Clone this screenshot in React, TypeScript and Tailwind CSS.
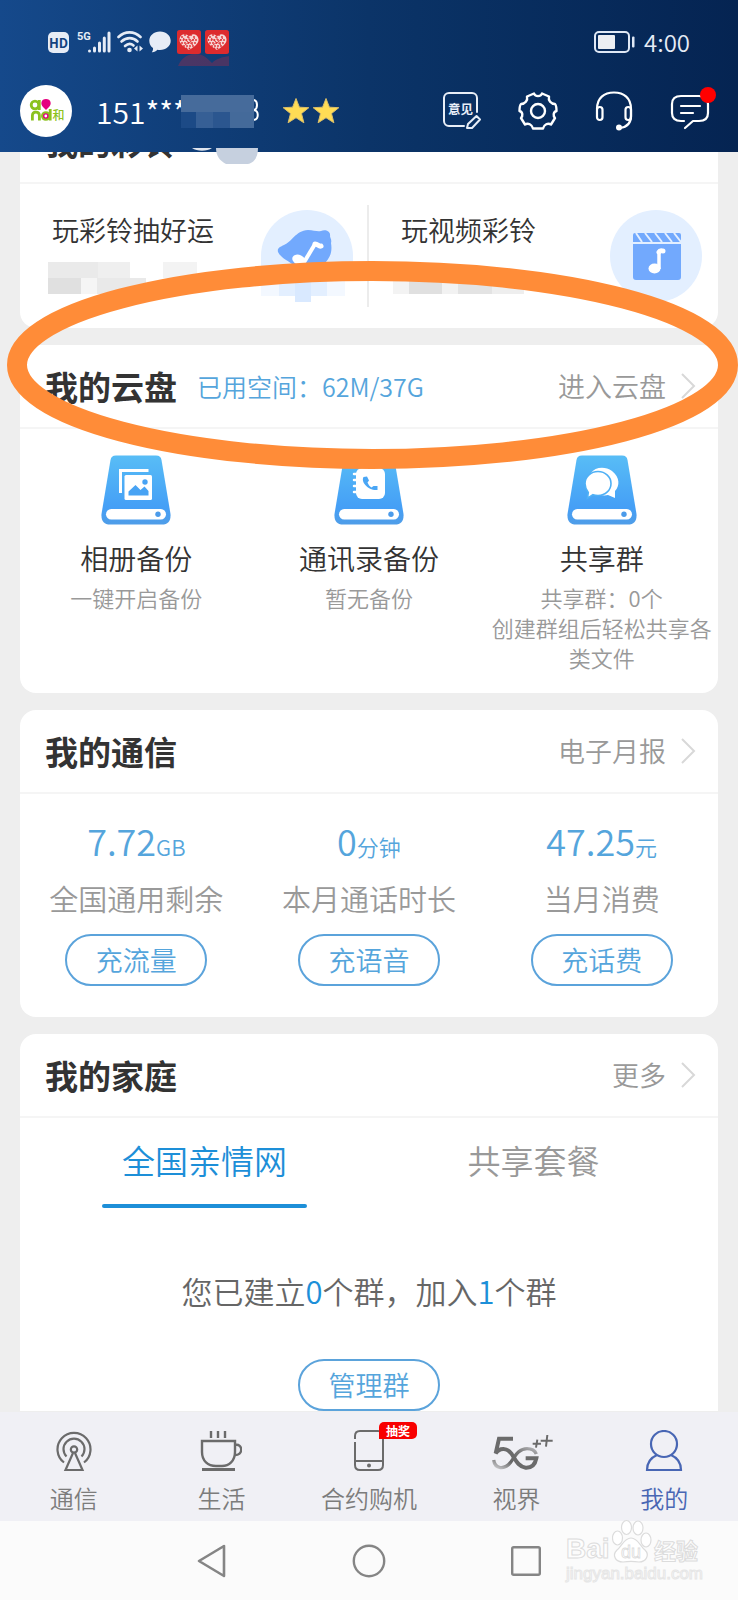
import React from "react";

const HEART_DOTS = [
  [5, 7], [8, 5], [11, 7], [14, 5], [17, 7], [19, 10], [3.5, 10], [6.5, 10], [9.5, 10], [13, 10], [16, 10],
  [5, 13], [8, 13], [11.5, 13], [15, 13], [18, 13], [7, 16], [10, 16], [13, 16], [16, 16], [9.5, 18.5], [12.5, 18.5],
];

function HeartApp() {
  return (
    <svg width="24" height="24" viewBox="0 0 24 24" aria-hidden="true">
      <rect width="24" height="24" rx="2.500" fill="#dd2b2e" />
      <path d="M12 20 C5 16 2 12.500 2.500 9 C3 4 9 2.500 12 6.500 C15 2.500 21 4 21.500 9 C22 12.500 19 16 12 20Z" fill="#f6d5d4" />
      {HEART_DOTS.map(([x, y], i) => (
        <circle key={i} cx={x} cy={y} r="0.9" fill="#dd2b2e" />
      ))}
      <path d="M6 8l5 4 M18 8l-5 4 M8 15l4-3 4 3 M12 7v3" stroke="#dd2b2e" strokeWidth="0.9" fill="none" />
    </svg>
  );
}

function StatusBar() {
  return (
    <div className="flex h-6 items-center justify-between pr-12 pl-12">
      <div className="relative flex items-center">
        <span className="flex h-[21px] w-[21px] items-center justify-center rounded-[5px] bg-[#e6ecf6] text-[13px] leading-none font-bold text-[#12427f]">
          HD
        </span>
        <svg className="ml-2" width="34" height="24" viewBox="0 0 34 24" aria-hidden="true">
          <text x="0" y="10" fontSize="11" fontWeight="700" fill="#e6ecf6" fontFamily="'Liberation Sans Narrow', Roboto, sans-serif">5G</text>
          <g stroke="#e6ecf6" strokeWidth="3" strokeLinecap="round">
            <path d="M12.500 21v0 M17.500 18v3 M22.500 13v8 M27.300 8v13 M32 3v18" />
          </g>
        </svg>
        <svg className="ml-1.5" width="26" height="24" viewBox="0 0 26 24" aria-hidden="true">
          <g fill="none" stroke="#e6ecf6" strokeWidth="2.600" strokeLinecap="round">
            <path d="M1.500 7 C8 0.800 17 0.800 23.500 7" />
            <path d="M4.500 11.500 C9.500 7 16 7 20.500 11.500" />
            <path d="M8 16 C11 13.300 14 13.300 16.500 15.500" />
          </g>
          <circle cx="12.500" cy="20" r="2.300" fill="#e6ecf6" />
          <path d="M20.500 15.500v6l-3.500-3z M22.500 15.500v6l3.500-3z" fill="#e6ecf6" />
        </svg>
        <svg className="ml-1.5" width="22" height="24" viewBox="0 0 22 24" aria-hidden="true">
          <path d="M11 1.500c6 0 10.700 4 10.700 9.300S17 20 11 20c-1 0-1.800 0-2.600-.2C7 21.500 5 22.500 2.800 22.300c1-1.200 1.400-2.600 1.200-4.200C1.700 16.500.3 14 .3 10.800.3 5.500 5 1.500 11 1.500z" fill="#e6ecf6" />
        </svg>
        <div className="ml-1.5 flex gap-1">
          <HeartApp />
          <HeartApp />
        </div>
        <svg className="absolute top-6 right-0" width="51" height="12" viewBox="0 0 51 12" aria-hidden="true">
          <path d="M0 12 C3 5 8 0 17 0 C26 0 30 5 34 9 C38 5 44 3 51 2 V12Z" fill="#7a2f55" opacity="0.55" />
        </svg>
      </div>
      <div className="flex items-center gap-2">
        <svg width="42" height="22" viewBox="0 0 42 22" aria-hidden="true">
          <rect x="1" y="1" width="34" height="20" rx="4" fill="none" stroke="#dfe8f5" strokeWidth="2" />
          <rect x="4" y="4" width="17" height="14" rx="1" fill="#eceef2" />
          <rect x="38" y="5.500" width="2.500" height="11" rx="1" fill="#dfe8f5" />
        </svg>
        <span className="text-[24px] leading-6 text-[#e6ecf6]">4:00</span>
      </div>
    </div>
  );
}

function Avatar() {
  return (
    <span className="flex h-[52px] w-[52px] shrink-0 rounded-full bg-white">
      <svg width="52" height="52" viewBox="0 0 52 52" aria-hidden="true">
        <g fill="none" stroke="#8cc220" strokeWidth="2.800">
          <circle cx="15" cy="20" r="3.800" />
          <path d="M19.300 15v10 M12.400 35.500v-5c0-4.500 7-4.500 7 0v5 M30.200 24v11.500" />
        </g>
        <path d="M26 14c5 0 6 5 3 8l-3 3-3-3c-3-3-2-8 3-8z" fill="#e5007f" />
        <circle cx="25.800" cy="31" r="3.800" fill="#e5007f" stroke="#8cc220" strokeWidth="2" />
        <circle cx="25.800" cy="31" r="1.400" fill="#fff" />
        <text x="32.500" y="34.500" fontSize="12" fontWeight="500" fill="#8cc220" fontFamily="'Noto Sans CJK SC', sans-serif">和</text>
      </svg>
    </span>
  );
}

function Star() {
  return (
    <svg width="28" height="28" viewBox="0 0 28 28" aria-hidden="true">
      <path d="M14 1.500l3.400 8.700 9.400.5-7.300 5.900 2.400 9.200-7.900-5.100-7.900 5.100 2.400-9.200L1.200 10.700l9.400-.5z" fill="#ffdc55" stroke="#d9bd6a" strokeWidth="1" />
    </svg>
  );
}

function AccountBar() {
  return (
    <div className="flex items-center pr-7 pl-5">
      <Avatar />
      <div className="relative ml-6 w-[164px] text-[30px] leading-[40px] text-white">
        151***
        <svg className="absolute top-1 right-0" width="82" height="34" viewBox="0 0 82 34" aria-hidden="true">
          <path d="M76 5c4 1 4 9 0 10c5 1 5 9 0 10" fill="none" stroke="#fff" strokeWidth="2" />
          <rect x="3" y="0" width="73" height="17" fill="#466b9b" />
          <rect x="3" y="17" width="15" height="16" fill="#1c4a86" />
          <rect x="18" y="17" width="17" height="16" fill="#365f95" />
          <rect x="35" y="17" width="17" height="16" fill="#2b568f" />
          <rect x="52" y="17" width="24" height="16" fill="#446a9a" />
        </svg>
      </div>
      <div className="ml-[22px] flex gap-0.5">
        <Star />
        <Star />
      </div>
      <div className="ml-auto flex items-center gap-9">
        <button type="button" aria-label="意见">
          <svg width="40" height="40" viewBox="0 0 40 40" fill="none" stroke="#e8eef7" strokeWidth="2" strokeLinecap="round" strokeLinejoin="round">
            <path d="M35 21V7a5 5 0 0 0-5-5H7a5 5 0 0 0-5 5v23a5 5 0 0 0 5 5h15" />
            <path d="M26 33l8.500-8 3.500 3.500-8 8.500h-5z" />
            <text x="6" y="22.500" fontSize="12.500" fontWeight="700" fill="#e8eef7" stroke="none" fontFamily="'Noto Sans CJK SC', sans-serif">意见</text>
          </svg>
        </button>
        <button type="button" aria-label="设置">
          <svg width="40" height="40" viewBox="0 0 40 40" fill="none" stroke="#fff" strokeWidth="2.400" strokeLinejoin="round">
            <path d="M16 2.500C17 6 23 6 24 2.500L31 5.500C30 9.500 33 13 37 13C38 14 38.500 18 38.500 20C35 21 35 25 37 27L33 33.500C30 31.500 26 33.500 25 37.500H15C14 33.500 10 31.500 7 33.500L3 27C5 25 5 21 1.500 20C1.500 18 2 14 3 13C7 13 10 9.500 9 5.500Z" />
            <circle cx="20" cy="20" r="7" />
          </svg>
        </button>
        <button type="button" aria-label="客服">
          <svg width="40" height="40" viewBox="0 0 40 40" fill="none" stroke="#fff" strokeWidth="2.200" strokeLinecap="round">
            <path d="M3 18C3 7 10 1.500 20 1.500S37 7 37 18v7c0 7-4 11-11 12" />
            <rect x="3" y="16" width="5.500" height="13" rx="2.700" />
            <rect x="31.500" y="16" width="5.500" height="13" rx="2.700" />
            <circle cx="25" cy="36.500" r="3" fill="#fff" stroke="none" />
          </svg>
        </button>
        <button type="button" aria-label="消息" className="relative">
          <svg width="40" height="40" viewBox="0 0 40 40" fill="none" stroke="#fff" strokeWidth="2.200" strokeLinecap="round" strokeLinejoin="round">
            <path d="M14 30H11c-6 0-9-3-9-8V13c0-5 3-8 9-8h18c6 0 9 3 9 8v9c0 5-3 8-9 8h-6l-8 7" />
            <path d="M11 15h19 M11 22h12" />
          </svg>
          <span className="absolute -top-1 right-[-6px] h-4 w-4 rounded-full bg-[#ff0000]" />
        </button>
      </div>
    </div>
  );
}

function Chevron() {
  return (
    <svg width="16" height="28" viewBox="0 0 16 28" fill="none" stroke="#d8d8d8" strokeWidth="2" aria-hidden="true">
      <path d="M2 2l12 12L2 26" />
    </svg>
  );
}

function CardHeader({ title, note, more }: { title: string; note?: string; more?: string }) {
  return (
    <div className="flex h-[84px] items-center border-b-2 border-[#f5f5f5] pr-[22px] pl-[25px]">
      <h2 className="text-[33px] leading-[40px] font-bold text-[#333]">{title}</h2>
      {note && <span className="ml-5 text-[25px] leading-[40px] text-[#55a5dc]">{note}</span>}
      {more && (
        <a href="#" className="ml-auto flex items-center gap-3.5 text-[27px] leading-[40px] text-[#999]">
          {more}
          <Chevron />
        </a>
      )}
    </div>
  );
}

function BellArt() {
  return (
    <svg width="92" height="92" viewBox="0 0 92 92" aria-hidden="true">
      <path d="M0 46A46 46 0 0 1 92 46V60H0Z" fill="#e3efff" />
      <path d="M17 42C16 38 19 37 23 35C31 32 34 21 47 20C53 20 56 22 60 21C64 19 70 21 69 26C69 28 71 29 70 33C72 45 67 51 58 58L34 56C26 50 20 48 17 42Z" fill="#72a9fd" />
      <path d="M54 34l-12 20" stroke="#fff" strokeWidth="4" />
      <path d="M54 34c3 0 4 3 6 2" stroke="#fff" strokeWidth="5" strokeLinecap="round" fill="none" />
      <ellipse cx="38" cy="50" rx="7" ry="5" fill="#fff" transform="rotate(25 38 50)" />
      <path d="M0 70H84V86H0Z" fill="#f3f8ff" />
      <path d="M18 70H66V86H18Z" fill="#e3efff" />
      <path d="M34 70H50V92H34Z" fill="#d9e9ff" />
    </svg>
  );
}

function ClapperArt() {
  return (
    <svg width="92" height="92" viewBox="0 0 92 92" aria-hidden="true">
      <circle cx="46" cy="46" r="46" fill="#e3efff" />
      <path d="M23 34h48v33a3 3 0 0 1-3 3H26a3 3 0 0 1-3-3z" fill="#72a9fd" />
      <path d="M25 23h44a2 2 0 0 1 2 2v7H23v-7a2 2 0 0 1 2-2z" fill="#72a9fd" />
      <path d="M26 23l6 9 M35 23l7 9 M45 23l7 9 M55 23l7 9 M64 23l7 9" stroke="#e3efff" strokeWidth="2" />
      <path d="M49 59V42" stroke="#fff" strokeWidth="3.500" />
      <path d="M49 42c1-2 3-1 4-1" stroke="#fff" strokeWidth="5" strokeLinecap="round" fill="none" />
      <ellipse cx="44.500" cy="58.500" rx="6" ry="5" fill="#fff" />
    </svg>
  );
}

function RingtoneCard() {
  return (
    <section className="rounded-2xl bg-white">
      <CardHeader title="我的彩铃" />
      <div className="grid h-36 grid-cols-2">
        <a href="#" className="relative flex items-start justify-between pt-[26px] pr-4 pl-8">
          <div>
            <div className="text-[27px] leading-[40px] text-[#333]">玩彩铃抽好运</div>
            <svg className="mt-3 -ml-1" width="150" height="32" viewBox="0 0 150 32" aria-hidden="true">
              <rect x="0" y="0" width="82" height="16" fill="#efefef" />
              <rect x="0" y="0" width="50" height="16" fill="#eaeaea" />
              <rect x="0" y="16" width="33" height="16" fill="#e0e0e0" />
              <rect x="33" y="16" width="16" height="16" fill="#f5f5f5" />
              <rect x="49" y="16" width="49" height="16" fill="#e9e9e9" />
              <rect x="115" y="0" width="34" height="16" fill="#f3f3f3" />
            </svg>
          </div>
          <BellArt />
          <span className="absolute top-[21px] right-0 h-[102px] w-0.5 bg-[#ececec]" />
        </a>
        <a href="#" className="flex items-start justify-between pt-[26px] pr-4 pl-8">
          <div>
            <div className="text-[27px] leading-[40px] text-[#333]">玩视频彩铃</div>
            <svg className="mt-3 -ml-2" width="134" height="32" viewBox="0 0 134 32" aria-hidden="true">
              <rect x="0" y="16" width="16" height="16" fill="#f3f3f3" />
              <rect x="16" y="16" width="33" height="16" fill="#e0e0e0" />
              <rect x="49" y="16" width="16" height="16" fill="#f2f2f2" />
              <rect x="65" y="16" width="34" height="16" fill="#e3e3e3" />
              <rect x="99" y="16" width="32" height="16" fill="#eeeeee" />
            </svg>
          </div>
          <ClapperArt />
        </a>
      </div>
    </section>
  );
}

function DriveIcon({ id, children }: { id: string; children: React.ReactNode }) {
  return (
    <svg width="70" height="70" viewBox="0 0 70 70" aria-hidden="true">
      <defs>
        <linearGradient id={id} x1="0" y1="0" x2="0" y2="1">
          <stop offset="0" stopColor="#58bdf6" />
          <stop offset="0.75" stopColor="#459ff6" />
          <stop offset="1" stopColor="#4f9de8" />
        </linearGradient>
      </defs>
      <path d="M15 0.500H55C58.500 0.500 60 2 60.500 5L69.500 59C70 66 67 69.500 61 69.500H9C3 69.500 0 66 0.500 59L9.500 5C10 2 11.500 0.500 15 0.500Z" fill={`url(#${id})`} />
      <rect x="5" y="54" width="60" height="10.500" rx="5.200" fill="#fff" />
      <circle cx="57" cy="59.300" r="2.700" fill="#4b9bea" />
      {children}
    </svg>
  );
}

const AlbumGlyph = (
  <>
    <path d="M19.500 38V15.500H47.500" fill="none" stroke="#fff" strokeWidth="3" />
    <rect x="23.500" y="20" width="27.500" height="25" rx="1.500" fill="#fff" />
    <path d="M27.500 40.500v-4l7-6.500 5 5 4-3.500 4 4.500v4.500z" fill="#48a3f4" />
    <circle cx="44" cy="27" r="2.700" fill="#48a3f4" />
  </>
);

const ContactGlyph = (
  <>
    <rect x="22" y="13" width="29" height="31" rx="6" fill="#fff" />
    <path d="M20 19h5 M20 25h5 M20 31h5 M20 37h5" stroke="#fff" strokeWidth="2.500" strokeLinecap="round" />
    <path d="M29.500 22c-3 5 5 14 14 13v-4h-4l-2 1.500c-2-1-3-3-4-5l1.500-2-2-4z" fill="#4aa6f5" />
  </>
);

const ChatGlyph = (
  <>
    <path d="M24 18c4-6 14-7 21-2 8 6 8 15 3 20v7l-7-3c-4 1-9 0-12-2z" fill="#fff" />
    <path d="M31 16.500c7.500 0 13 5.500 13 12s-5.500 12-13 12c-2 0-3.500-.3-5-.8l-5.500 3.500.8-5.800C19.500 35 18 32 18 28.500c0-6.500 5.500-12 13-12z" fill="#fff" stroke="#4fb0f5" strokeWidth="1.600" />
  </>
);

const BACKUPS = [
  { title: "相册备份", lines: ["一键开启备份"], glyph: AlbumGlyph },
  { title: "通讯录备份", lines: ["暂无备份"], glyph: ContactGlyph },
  { title: "共享群", lines: ["共享群：0个", "创建群组后轻松共享各类文件"], glyph: ChatGlyph },
];

function CloudCard() {
  return (
    <section className="rounded-2xl bg-white">
      <CardHeader title="我的云盘" note="已用空间：62M/37G" more="进入云盘" />
      <div className="grid grid-cols-3 pt-[26px] pb-[21px]">
        {BACKUPS.map((b, i) => (
          <a href="#" key={b.title} className="flex flex-col items-center px-1 text-center">
            <DriveIcon id={`drive-${i}`}>{b.glyph}</DriveIcon>
            <span className="mt-[13px] text-[28px] leading-[40px] text-[#333]">{b.title}</span>
            <span className="mt-1 text-[22px] leading-[30px] text-[#999]">
              {b.lines.map((l) => (
                <span key={l} className="block">{l}</span>
              ))}
            </span>
          </a>
        ))}
      </div>
    </section>
  );
}

function PillButton({ children }: { children: React.ReactNode }) {
  return (
    <button type="button" className="flex h-[52px] w-[142px] items-center justify-center rounded-full border-2 border-[#5ba3db] text-[27px] leading-[40px] text-[#55a5dc]">
      {children}
    </button>
  );
}

const USAGE = [
  { value: "7.72", unit: "GB", label: "全国通用剩余", action: "充流量" },
  { value: "0", unit: "分钟", label: "本月通话时长", action: "充语音" },
  { value: "47.25", unit: "元", label: "当月消费", action: "充话费" },
];

function UsageCard() {
  return (
    <section className="rounded-2xl bg-white">
      <CardHeader title="我的通信" more="电子月报" />
      <div className="grid grid-cols-3 pt-6 pb-[31px]">
        {USAGE.map((u) => (
          <div key={u.label} className="flex flex-col items-center">
            <div className="text-[36px] leading-[44px] text-[#55a5dc]">
              {u.value}
              <span className="text-[22px] leading-none">{u.unit}</span>
            </div>
            <div className="mt-4 mb-4 text-[29px] leading-[40px] text-[#999]">{u.label}</div>
            <PillButton>{u.action}</PillButton>
          </div>
        ))}
      </div>
    </section>
  );
}

function FamilyCard() {
  return (
    <section className="rounded-t-2xl bg-white">
      <CardHeader title="我的家庭" more="更多" />
      <div className="grid grid-cols-2 px-5" role="tablist">
        <button type="button" role="tab" aria-selected="true" className="flex flex-col items-center pt-[22px] text-[33px] leading-[40px] text-[#1d8fd8]">
          全国亲情网
          <span className="mt-6 h-1 w-[205px] rounded-full bg-[#1d8fd8]" />
        </button>
        <button type="button" role="tab" aria-selected="false" className="flex flex-col items-center pt-[22px] text-[33px] leading-[40px] text-[#999]">
          共享套餐
        </button>
      </div>
      <p className="mt-[63px] text-center text-[31px] leading-[40px] text-[#666]">
        您已建立<span className="text-[#1d8fd8]">0</span>个群，加入<span className="text-[#1d8fd8]">1</span>个群
      </p>
      <div className="mt-12 flex justify-center">
        <PillButton>管理群</PillButton>
      </div>
    </section>
  );
}

function SignalIcon() {
  return (
    <svg width="36" height="42" viewBox="0 0 36 42" fill="none" stroke="#6b6b6b" strokeWidth="2.200" aria-hidden="true">
      <path d="M8 32.500A16.500 16.500 0 1 1 28 32.500" />
      <path d="M10.500 26.500A10.500 10.500 0 1 1 25.500 26.500" />
      <circle cx="18" cy="19.500" r="3.200" />
      <path d="M17 23L9.500 40h17L19 23" />
    </svg>
  );
}

function CupIcon() {
  return (
    <svg width="42" height="42" viewBox="0 0 42 42" fill="none" stroke="#6b6b6b" strokeWidth="2.400" aria-hidden="true">
      <path d="M11 1v7 M18 1v7 M25 1v7" />
      <path d="M2 11h33v11c0 9-6 14-13 14h-6C8 36 2 31 2 22z" />
      <path d="M35 15c8-2 9 11-1 10" />
      <path d="M2 39.500h33" strokeWidth="2.800" />
    </svg>
  );
}

function PhoneIcon() {
  return (
    <svg width="30" height="42" viewBox="0 0 30 42" fill="none" stroke="#6b6b6b" strokeWidth="2" aria-hidden="true">
      <path d="M1 9V6c0-3 2-5 5-5h18c3 0 5 2 5 5v29c0 3-2 5-5 5H6c-3 0-5-2-5-5V12 M1 31h28" />
      <circle cx="15" cy="35.500" r="2" fill="#6b6b6b" stroke="none" />
    </svg>
  );
}

function FiveGIcon() {
  return (
    <svg width="76" height="42" viewBox="334 90 228 126" fill="none" stroke="#6b6b6b" strokeWidth="12" role="img" aria-label="5G++">
      <defs>
        <linearGradient id="loop" x1="0" y1="1" x2="1" y2="0">
          <stop offset="0" stopColor="#c9c9cc" />
          <stop offset="0.35" stopColor="#666" />
          <stop offset="0.7" stopColor="#777" />
          <stop offset="1" stopColor="#b5b5b8" />
        </linearGradient>
      </defs>
      <path d="M378 180C382 208 410 210 428 188C442 170 452 146 478 146C492 146 502 152 506 162" stroke="url(#loop)" strokeWidth="10" />
      <path d="M436 116H394L384 160C396 142 418 142 432 162C444 180 452 200 474 203C494 204 503 190 506 175H474" />
      <path d="M495 131h25 M509 119l-4 24 M519 122h36 M539 105l-4 35" strokeWidth="6" />
    </svg>
  );
}

function PersonIcon() {
  return (
    <svg width="38" height="42" viewBox="0 0 38 42" fill="none" stroke="#4866b4" strokeWidth="2.200" aria-hidden="true">
      <circle cx="19" cy="14" r="13" />
      <path d="M12 25C5 28 2 33 2 40H36C36 33 33 28 26 25" />
    </svg>
  );
}

const TABS = [
  { label: "通信", icon: <SignalIcon /> },
  { label: "生活", icon: <CupIcon /> },
  { label: "合约购机", icon: <PhoneIcon />, badge: "抽奖" },
  { label: "视界", icon: <FiveGIcon /> },
  { label: "我的", icon: <PersonIcon />, active: true },
];

function TabBar() {
  return (
    <nav className="grid grid-cols-5 bg-[#f0f0f5] pt-[18px] pb-[5px]">
      {TABS.map((t) => (
        <a href="#" key={t.label} className={t.active ? "relative flex flex-col items-center text-[#4866b4]" : "relative flex flex-col items-center text-[#7c7c7c]"}>
          <span className="relative">
            {t.icon}
            {t.badge && (
              <span className="absolute -top-2 left-[25px] flex h-[17px] w-[38px] items-center justify-center rounded-[5px] rounded-bl-none bg-[#f80000] text-[12px] leading-none font-bold text-white">
                {t.badge}
              </span>
            )}
          </span>
          <span className="mt-2 text-[24px] leading-9">{t.label}</span>
        </a>
      ))}
    </nav>
  );
}

function Watermark() {
  return (
    <div className="absolute -top-0.5 right-10 w-[132px] text-[#fdfdfd]">
      <div className="flex h-11 items-end justify-between text-[28px] leading-[28px] font-bold [-webkit-text-stroke:1px_#dcdcdc]">
        <span className="font-['Liberation_Sans']">Bai</span>
        <svg width="40" height="44" viewBox="0 0 40 44" fill="#fff" stroke="#dcdcdc" strokeWidth="1.200" role="img" aria-label="du">
          <ellipse cx="5.500" cy="19" rx="5" ry="7" />
          <ellipse cx="14.500" cy="8.500" rx="5" ry="7" />
          <ellipse cx="26" cy="9" rx="5" ry="7" />
          <ellipse cx="34" cy="21" rx="5" ry="7" />
          <path d="M19 19C26 19 28 27 33 31C38 36 34 43 27 43C21 42 17 42 11 43C3 43 0 36 5 31C10 27 12 19 19 19Z" />
          <text x="9" y="39" fontSize="18" fontWeight="400" strokeWidth="0.800" fontFamily="'Liberation Sans', sans-serif">du</text>
        </svg>
        <span className="text-[22px]">经验</span>
      </div>
      <div className="font-['Liberation_Sans'] text-[17px] leading-[22px] [-webkit-text-stroke:1px_#e6e6e6]">jingyan.baidu.com</div>
    </div>
  );
}

function SystemBar() {
  return (
    <div className="relative flex h-[79px] items-center justify-center bg-[#fbfbfb]">
      <button type="button" aria-label="返回" className="flex w-[157px] justify-center">
        <svg width="30" height="34" viewBox="0 0 30 34" fill="none" stroke="#858585" strokeWidth="2.600" strokeLinejoin="round">
          <path d="M27 2v30L2 17z" />
        </svg>
      </button>
      <button type="button" aria-label="主页" className="flex w-[157px] justify-center">
        <svg width="34" height="34" viewBox="0 0 34 34" fill="none" stroke="#858585" strokeWidth="2.400">
          <circle cx="17" cy="17" r="15.200" />
        </svg>
      </button>
      <button type="button" aria-label="最近任务" className="flex w-[157px] justify-center">
        <svg width="30" height="30" viewBox="0 0 30 30" fill="none" stroke="#858585" strokeWidth="2.400">
          <rect x="1.200" y="1.200" width="27.600" height="27.600" rx="1.500" />
        </svg>
      </button>
      <Watermark />
    </div>
  );
}

export default function App() {
  return (
    <div className="relative flex min-h-screen flex-col bg-[#eeeeee] font-['Noto_Sans_CJK_SC',sans-serif] font-[350]">
      <header className="relative z-10 flex flex-col gap-[31px] bg-linear-to-r from-[#15498b] via-[#0b3468] to-[#052452] pt-[30px] pb-[15px]">
        <StatusBar />
        <AccountBar />
        <svg className="absolute -bottom-3 left-[192px]" width="66" height="16" viewBox="0 0 66 16" aria-hidden="true">
          <path d="M0 0H20C15 3.500 5 3.500 0 0Z" fill="#dfe5ee" />
          <path d="M24 0H66C66 9 62 16 54 16H34C28 13 24 8 24 0Z" fill="#c6d0df" />
        </svg>
      </header>
      <main className="flex-1 overflow-hidden px-5">
        <div className="-mt-[52px] flex flex-col gap-[17px]">
          <RingtoneCard />
          <CloudCard />
          <UsageCard />
          <FamilyCard />
        </div>
      </main>
      <TabBar />
      <SystemBar />
      <svg className="pointer-events-none absolute top-[260px] left-[7px] z-20" width="731" height="210" viewBox="0 0 731 210" fill="none" aria-hidden="true">
        <ellipse cx="365.500" cy="105" rx="355.500" ry="94" stroke="#ff8c38" strokeWidth="20" />
      </svg>
    </div>
  );
}
